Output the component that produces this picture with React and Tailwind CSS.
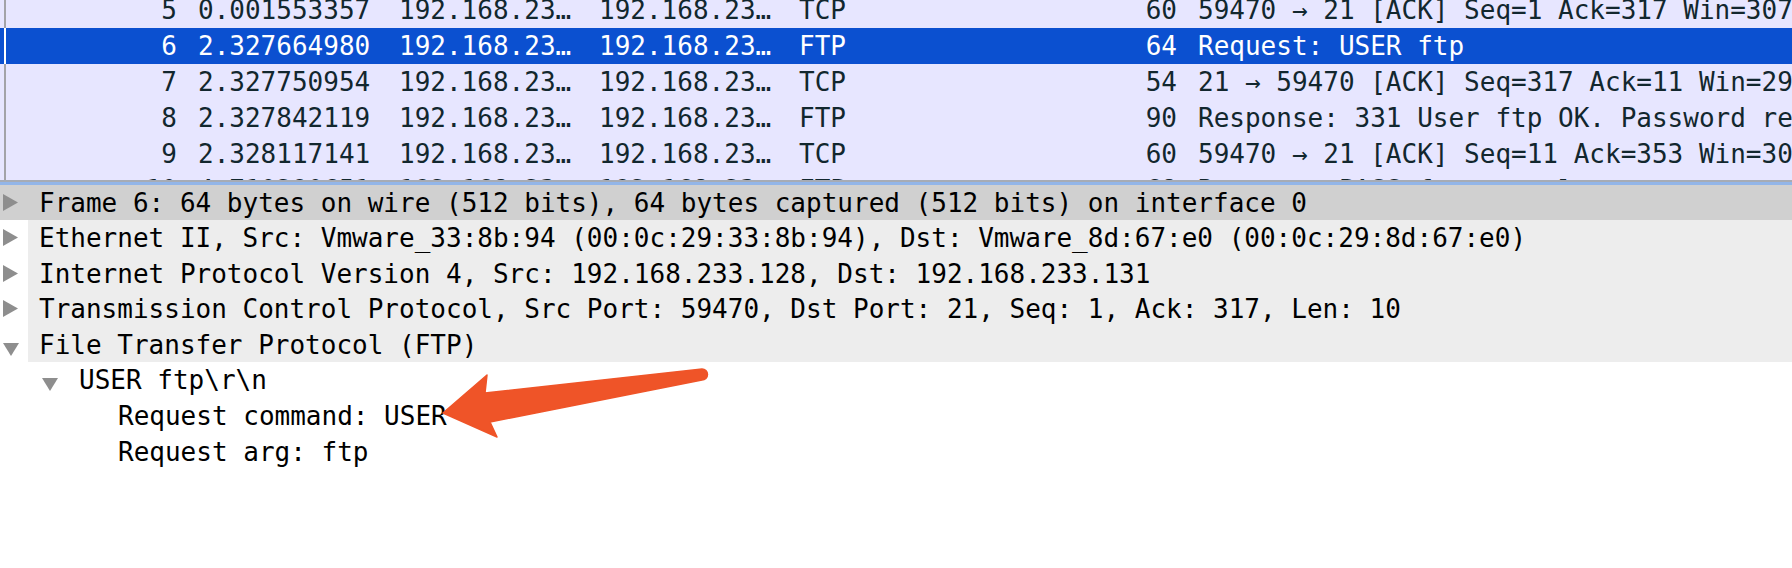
import React from "react";

const packets = [
  { no: "5", time: "0.001553357", src: "192.168.23…", dst: "192.168.23…", proto: "TCP", len: "60", info: "59470 → 21 [ACK] Seq=1 Ack=317 Win=30720 Len=0" },
  { no: "6", time: "2.327664980", src: "192.168.23…", dst: "192.168.23…", proto: "FTP", len: "64", info: "Request: USER ftp", sel: true },
  { no: "7", time: "2.327750954", src: "192.168.23…", dst: "192.168.23…", proto: "TCP", len: "54", info: "21 → 59470 [ACK] Seq=317 Ack=11 Win=29200 Len=0" },
  { no: "8", time: "2.327842119", src: "192.168.23…", dst: "192.168.23…", proto: "FTP", len: "90", info: "Response: 331 User ftp OK. Password required" },
  { no: "9", time: "2.328117141", src: "192.168.23…", dst: "192.168.23…", proto: "TCP", len: "60", info: "59470 → 21 [ACK] Seq=11 Ack=353 Win=30720 Len=0" },
  { no: "10", time: "4.710290651", src: "192.168.23…", dst: "192.168.23…", proto: "FTP", len: "68", info: "Request: PASS ftp@example" },
];

function RightTri() {
  return (
    <svg width="15" height="17" viewBox="0 0 15 17" className="shrink-0">
      <polygon points="0,0 15,8.5 0,17" fill="#8e8e8e" />
    </svg>
  );
}

function DownTri() {
  return (
    <svg width="16" height="13" viewBox="0 0 16 13" className="shrink-0">
      <polygon points="0,0 16,0 8,13" fill="#8e8e8e" />
    </svg>
  );
}

function PacketRow({ p }) {
  const sel = p.sel;
  return (
    <div
      className={
        sel
          ? "flex h-[36px] items-center bg-[#0b50d0] text-white leading-[32px] whitespace-nowrap"
          : "flex h-[36px] items-center text-[#12272e] leading-[32px] whitespace-nowrap"
      }
    >
      <div className="w-[4px] shrink-0" />
      <div className={sel ? "w-[2px] h-full shrink-0 bg-white" : "w-[2px] h-full shrink-0 bg-[#a3a3a8]"} />
      <span className="w-[171px] shrink-0 text-right">{p.no}</span>
      <span className="w-[222px] shrink-0 pl-[21px]">{p.time}</span>
      <span className="w-[200px] shrink-0">{p.src}</span>
      <span className="w-[200px] shrink-0">{p.dst}</span>
      <span className="w-[301px] shrink-0">{p.proto}</span>
      <span className="w-[77px] shrink-0 text-right">{p.len}</span>
      <span className="pl-[21px]">{p.info}</span>
    </div>
  );
}

function TopRow({ text, open, selected, tall }) {
  const h = tall ? "h-[36px]" : "h-[35px]";
  return (
    <div className={selected ? `flex ${h} bg-[#d0d0d0]` : `flex ${h}`}>
      <div className="w-[28px] shrink-0 flex items-center pl-[3px]">
        {open ? (
          <div className="pt-[9px]">
            <DownTri />
          </div>
        ) : (
          <div className="-mt-[1px]">
            <RightTri />
          </div>
        )}
      </div>
      <div
        className={
          selected
            ? "flex-1 pl-[11px] leading-[30px] flex items-center whitespace-nowrap"
            : "flex-1 pl-[11px] bg-[#ededed] leading-[30px] flex items-center whitespace-nowrap"
        }
      >
        {text}
      </div>
    </div>
  );
}

export default function App() {
  return (
    <div
      className="relative w-[1792px] h-[568px] overflow-hidden bg-white text-[26px]"
      style={{ fontFamily: '"DejaVu Sans Mono", "Liberation Mono", monospace' }}
    >
      {/* Packet list */}
      <div className="h-[180px] overflow-hidden bg-[#e7e6ff]">
        <div className="-mt-[8px]">
          {packets.map((p) => (
            <PacketRow key={p.no} p={p} />
          ))}
        </div>
      </div>

      {/* Splitter */}
      <div className="h-[5px] border-t-[2px] border-[#a6abb5] bg-[#92b5e8]" />

      {/* Details */}
      <div className="flex flex-col text-black">
        <TopRow selected text="Frame 6: 64 bytes on wire (512 bits), 64 bytes captured (512 bits) on interface 0" />
        <TopRow tall text="Ethernet II, Src: Vmware_33:8b:94 (00:0c:29:33:8b:94), Dst: Vmware_8d:67:e0 (00:0c:29:8d:67:e0)" />
        <TopRow text="Internet Protocol Version 4, Src: 192.168.233.128, Dst: 192.168.233.131" />
        <TopRow tall text="Transmission Control Protocol, Src Port: 59470, Dst Port: 21, Seq: 1, Ack: 317, Len: 10" />
        <TopRow open text="File Transfer Protocol (FTP)" />
        <div className="flex h-[36px] items-center">
          <div className="w-[79px] shrink-0 flex items-center pl-[42px] pt-[9px]">
            <DownTri />
          </div>
          <span className="leading-[30px] whitespace-nowrap">USER ftp\r\n</span>
        </div>
        <div className="flex h-[36px] items-center pl-[118px]">
          <span className="leading-[30px] whitespace-nowrap">Request command: USER</span>
        </div>
        <div className="flex h-[36px] items-center pl-[118px]">
          <span className="leading-[30px] whitespace-nowrap">Request arg: ftp</span>
        </div>
      </div>

      {/* Annotation arrow */}
      <svg
        className="absolute left-0 top-0 pointer-events-none"
        width="1792"
        height="568"
        viewBox="0 0 1792 568"
      >
        <path
          d="M443,413 L487,375 L485,393 L702,369 A5.5,5.5 0 0 1 702,380 L490,422 L497,437 Z"
          fill="#ef5428"
          stroke="#ef5428"
          strokeWidth="1.5"
          strokeLinejoin="round"
        />
      </svg>
    </div>
  );
}
